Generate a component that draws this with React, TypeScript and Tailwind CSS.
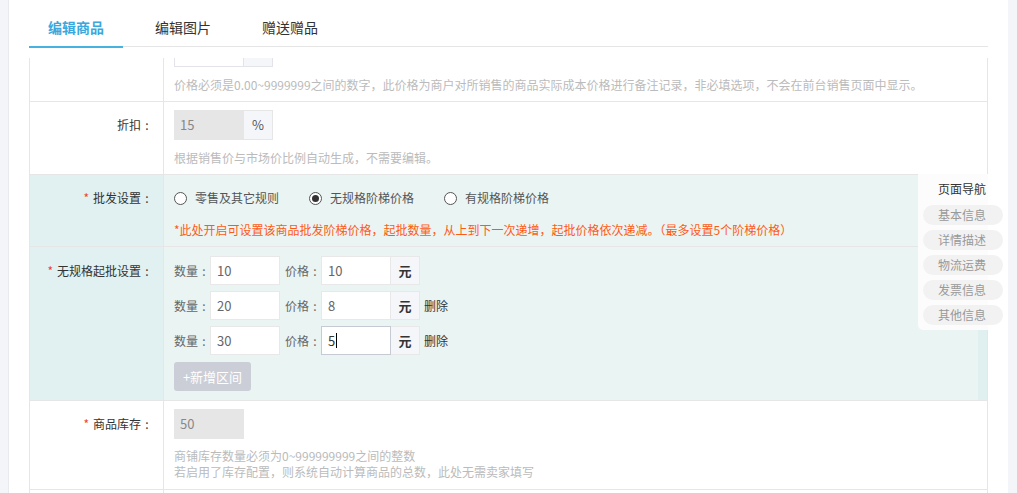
import React from "react";

const FONT = { fontFamily: '"Noto Sans CJK SC", "Noto Sans", "Liberation Sans", sans-serif' };

function Colon() {
  return <span className="inline-block w-[12px] text-center">:</span>;
}

function Label({ text, required }: { text: string; required?: boolean }) {
  return (
    <div className="text-right pr-[10px] text-[12px] text-[#333] whitespace-nowrap">
      {required && <span className="text-[#f44336] mr-[4px]">*</span>}
      {text}
      <Colon />
    </div>
  );
}

function Radio({ checked, label }: { checked?: boolean; label: string }) {
  return (
    <div className="flex items-center mr-[30px]">
      <div className="w-[13px] h-[13px] rounded-full border border-[#555] bg-white flex items-center justify-center">
        {checked && <div className="w-[7px] h-[7px] rounded-full bg-[#333]" />}
      </div>
      <span className="ml-[8px] text-[12px] text-[#555]">{label}</span>
    </div>
  );
}

function TierRow({ qty, price, del, focused }: { qty: string; price: string; del?: boolean; focused?: boolean }) {
  return (
    <div className="flex items-center h-[29px] text-[12px] text-[#666]">
      <span className="w-[36px] whitespace-nowrap">
        数量
        <Colon />
      </span>
      <div className="w-[70px] h-[29px] bg-white border border-[#e8e8e8] flex items-center pl-[6px] text-[13px] text-[#666]">{qty}</div>
      <span className="ml-[5px] w-[36px] whitespace-nowrap">
        价格
        <Colon />
      </span>
      <div
        className={
          "w-[70px] h-[29px] bg-white border flex items-center pl-[6px] text-[13px] " +
          (focused ? "border-[#c6cad2] text-[#333]" : "border-[#e8e8e8] text-[#666]")
        }
      >
        {price}
        {focused && <span className="inline-block w-px h-[15px] bg-black ml-px" />}
      </div>
      <div className="w-[29px] h-[29px] bg-[#f5f6fa] border border-l-0 border-[#e8e8e8] flex items-center justify-center text-[13px] font-bold text-[#333]">
        元
      </div>
      {del && <span className="ml-[4px] text-[12px] text-[#333]">删除</span>}
    </div>
  );
}

export default function App() {
  const navItems = ["基本信息", "详情描述", "物流运费", "发票信息", "其他信息"];
  return (
    <div className="relative flex w-[1017px] h-[493px] overflow-hidden bg-white" style={FONT}>
      <div className="w-[9px] h-full bg-[#f4f5f9] border-r border-[#e8eaef]" />
      <div className="flex-1 flex flex-col px-[20px] min-w-0">
        {/* Tabs */}
        <div className="h-[47px] border-b border-[#e5e5e5] flex shrink-0">
          <div className="relative w-[94px] h-full flex justify-center items-center pt-[9px] text-[14px] font-bold text-[#3aa8dc]">
            编辑商品
            <div className="absolute left-0 right-0 bottom-[-2px] h-[2px] bg-[#45b2e0]" />
          </div>
          <div className="ml-[13px] w-[94px] h-full flex justify-center items-center pt-[9px] text-[14px] text-[#333]">
            编辑图片
          </div>
          <div className="ml-[13px] w-[94px] h-full flex justify-center items-center pt-[9px] text-[14px] text-[#333]">
            赠送赠品
          </div>
        </div>

        {/* Scroll area */}
        <div className="mt-[11px] flex-1 overflow-hidden">
          <div className="-mt-[30px] border border-b-0 border-[#e6e6e6]">
            {/* Row 1 (clipped) */}
            <div className="flex border-b border-[#e6e6e6]">
              <div className="w-[134px] border-r border-[#e6e6e6]" />
              <div className="flex-1 pl-[10px] pt-[8px] pb-[7px]">
                <div className="flex">
                  <div className="w-[70px] h-[30px] bg-white border border-[#e2e4ea]" />
                  <div className="w-[29px] h-[30px] bg-[#f5f6fa] border border-l-0 border-[#e2e4ea]" />
                </div>
                <div className="mt-[9px] leading-[18px] text-[12px] text-[#bbb] whitespace-nowrap">
                  价格必须是0.00~9999999之间的数字，此价格为商户对所销售的商品实际成本价格进行备注记录，非必填选项，不会在前台销售页面中显示。
                </div>
              </div>
            </div>

            {/* Row 2 折扣 */}
            <div className="flex border-b border-[#e6e6e6]">
              <div className="w-[134px] border-r border-[#e6e6e6] pt-[8px] leading-[30px]">
                <Label text="折扣" />
              </div>
              <div className="flex-1 pl-[10px] pt-[8px] pb-[7px]">
                <div className="flex">
                  <div className="w-[70px] h-[30px] bg-[#e6e6e6] flex items-center pl-[6px] text-[13px] text-[#888]">15</div>
                  <div className="w-[29px] h-[30px] bg-[#f5f6fa] border border-l-0 border-[#e6e6e6] flex items-center justify-center text-[13px] text-[#555]">
                    %
                  </div>
                </div>
                <div className="mt-[9px] leading-[18px] text-[12px] text-[#bbb] whitespace-nowrap">
                  根据销售价与市场价比例自动生成，不需要编辑。
                </div>
              </div>
            </div>

            {/* Row 3 批发设置 */}
            <div className="flex border-b border-[#e6e6e6]">
              <div className="w-[134px] border-r border-[#e6e6e6] bg-[#e1f0f0] pt-[8px] leading-[30px]">
                <Label text="批发设置" required />
              </div>
              <div className="flex-1 bg-[#eaf4f3] pl-[10px] pt-[8px] pb-[7px]">
                <div className="flex items-center h-[30px]">
                  <Radio label="零售及其它规则" />
                  <Radio label="无规格阶梯价格" checked />
                  <Radio label="有规格阶梯价格" />
                </div>
                <div className="mt-[8px] leading-[18px] text-[12px] text-[#ff5a14] whitespace-nowrap">
                  *此处开启可设置该商品批发阶梯价格，起批数量，从上到下一次递增，起批价格依次递减。（最多设置5个阶梯价格）
                </div>
              </div>
            </div>

            {/* Row 4 无规格起批设置 */}
            <div className="flex border-b border-[#e6e6e6]">
              <div className="w-[134px] border-r border-[#e6e6e6] bg-[#e1f0f0] pt-[9px] leading-[29px]">
                <Label text="无规格起批设置" required />
              </div>
              <div className="flex-1 flex bg-[#eaf4f3]">
                <div className="flex-1 pl-[10px] pt-[9px] pb-[9px] flex flex-col gap-[6px]">
                  <TierRow qty="10" price="10" />
                  <TierRow qty="20" price="8" del />
                  <TierRow qty="30" price="5" del focused />
                  <div className="mt-[1px] w-[77px] h-[29px] rounded-[3px] bg-[#cbced6] flex items-center justify-center text-[13px] text-white">
                    +新增区间
                  </div>
                </div>
                <div className="w-[9px] bg-[#e0efef]" />
              </div>
            </div>

            {/* Row 5 商品库存 */}
            <div className="flex border-b border-[#e6e6e6]">
              <div className="w-[134px] border-r border-[#e6e6e6] pt-[8px] leading-[30px]">
                <Label text="商品库存" required />
              </div>
              <div className="flex-1 pl-[10px] pt-[8px] pb-[9px]">
                <div className="w-[70px] h-[30px] bg-[#e6e6e6] flex items-center pl-[6px] text-[13px] text-[#888]">50</div>
                <div className="mt-[9px] leading-[16px] text-[12px] text-[#bbb] whitespace-nowrap">
                  <div>商铺库存数量必须为0~999999999之间的整数</div>
                  <div>若启用了库存配置，则系统自动计算商品的总数，此处无需卖家填写</div>
                </div>
              </div>
            </div>

            {/* Row 6 (clipped) */}
            <div className="flex h-[40px]">
              <div className="w-[134px] border-r border-[#e6e6e6]" />
              <div className="flex-1" />
            </div>
          </div>
        </div>
      </div>
      <div className="w-[9px] h-full bg-[#f4f5f9]" />

      {/* Page navigation overlay */}
      <div className="absolute left-[918px] top-[174px] w-[70px] h-[156px] bg-[#fcfcfc] rounded-bl-[5px] pt-[5px]">
        <div className="pl-[20px] leading-[20px] text-[12px] text-[#333] whitespace-nowrap">页面导航</div>
        <div className="mt-[6px] flex flex-col gap-[5px]">
          {navItems.map((t) => (
            <div
              key={t}
              className="ml-[5px] w-[80px] h-[20px] rounded-full bg-[#f2f2f2] pl-[15px] leading-[20px] text-[12px] text-[#999] whitespace-nowrap"
            >
              {t}
            </div>
          ))}
        </div>
      </div>
    </div>
  );
}
